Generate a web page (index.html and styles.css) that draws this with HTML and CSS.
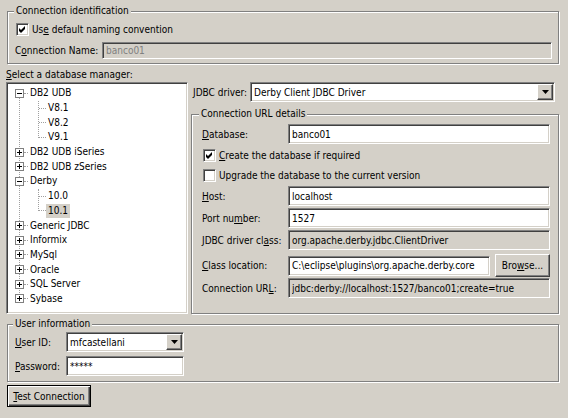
FILE: index.html
```html
<!DOCTYPE html>
<html>
<head>
    <meta charset="utf-8">
    <link rel="stylesheet" href="styles.css">
</head>
<body>
<div id="dialog">
    <fieldset class="group ident">
        <legend>Connection identification</legend>
        <div class="check-row">
            <span class="checkbox"><svg width="9" height="9" viewBox="0 0 9 9"><polygon points="1,3 3,5 7,1 7,4 3,8 1,6" fill="#000"/></svg></span>
            <span>Us<u>e</u> default naming convention</span>
        </div>
        <div class="field-row name-row">
            <span class="label">C<u>o</u>nnection Name:</span>
            <input class="field disabled" type="text" value="banco01" disabled>
        </div>
    </fieldset>

    <div class="caption"><u>S</u>elect a database manager:</div>

    <div class="main">
        <div class="tree">
            <ul class="roots">
                <li>
                    <div class="node"><span class="expander"></span><span class="hline"></span><span class="text">DB2 UDB</span></div>
                    <ul class="children">
                        <li><div class="node"><span class="hline"></span><span class="text">V8.1</span></div></li>
                        <li><div class="node"><span class="hline"></span><span class="text">V8.2</span></div></li>
                        <li><div class="node"><span class="hline"></span><span class="text">V9.1</span></div></li>
                    </ul>
                </li>
                <li><div class="node"><span class="expander closed"></span><span class="hline"></span><span class="text">DB2 UDB iSeries</span></div></li>
                <li><div class="node"><span class="expander closed"></span><span class="hline"></span><span class="text">DB2 UDB zSeries</span></div></li>
                <li>
                    <div class="node"><span class="expander"></span><span class="hline"></span><span class="text">Derby</span></div>
                    <ul class="children">
                        <li><div class="node"><span class="hline"></span><span class="text">10.0</span></div></li>
                        <li><div class="node selected"><span class="hline"></span><span class="text">10.1</span></div></li>
                    </ul>
                </li>
                <li><div class="node"><span class="expander closed"></span><span class="hline"></span><span class="text">Generic JDBC</span></div></li>
                <li><div class="node"><span class="expander closed"></span><span class="hline"></span><span class="text">Informix</span></div></li>
                <li><div class="node"><span class="expander closed"></span><span class="hline"></span><span class="text">MySql</span></div></li>
                <li><div class="node"><span class="expander closed"></span><span class="hline"></span><span class="text">Oracle</span></div></li>
                <li><div class="node"><span class="expander closed"></span><span class="hline"></span><span class="text">SQL Server</span></div></li>
                <li><div class="node"><span class="expander closed"></span><span class="hline"></span><span class="text">Sybase</span></div></li>
            </ul>
        </div>

        <div class="right">
            <div class="driver-row">
                <span class="label"><u>J</u>DBC driver:</span>
                <div class="combo driver-combo">
                    <span class="value">Derby Client JDBC Driver</span>
                    <span class="drop"><svg width="7" height="4" viewBox="0 0 7 4"><polygon points="0,0 7,0 3.5,4" fill="#000"/></svg></span>
                </div>
            </div>

            <fieldset class="group url">
                <legend>Connection URL details</legend>
                <div class="field-row first">
                    <span class="label"><u>D</u>atabase:</span>
                    <input class="field" type="text" value="banco01">
                </div>
                <div class="check-row">
                    <span class="checkbox"><svg width="9" height="9" viewBox="0 0 9 9"><polygon points="1,3 3,5 7,1 7,4 3,8 1,6" fill="#000"/></svg></span>
                    <span><u>C</u>reate the database if required</span>
                </div>
                <div class="check-row">
                    <span class="checkbox"></span>
                    <span>Up<u>g</u>rade the database to the current version</span>
                </div>
                <div class="field-row">
                    <span class="label"><u>H</u>ost:</span>
                    <input class="field" type="text" value="localhost">
                </div>
                <div class="field-row">
                    <span class="label">Port nu<u>m</u>ber:</span>
                    <input class="field" type="text" value="1527">
                </div>
                <div class="field-row">
                    <span class="label">JDBC driver cl<u>a</u>ss:</span>
                    <input class="field readonly" type="text" value="org.apache.derby.jdbc.ClientDriver" readonly>
                </div>
                <div class="field-row location-row">
                    <span class="label"><u>C</u>lass location:</span>
                    <input class="field" type="text" value="C:\eclipse\plugins\org.apache.derby.core_">
                    <button class="btn browse">Bro<u>w</u>se...</button>
                </div>
                <div class="field-row url-row">
                    <span class="label">Connection UR<u>L</u>:</span>
                    <input class="field readonly" type="text" value="jdbc:derby://localhost:1527/banco01;create=true" readonly>
                </div>
            </fieldset>
        </div>
    </div>

    <fieldset class="group user">
        <legend>User information</legend>
        <div class="field-row user-row">
            <span class="label"><u>U</u>ser ID:</span>
            <div class="combo user-combo">
                <span class="value">mfcastellani</span>
                <span class="drop"><svg width="7" height="4" viewBox="0 0 7 4"><polygon points="0,0 7,0 3.5,4" fill="#000"/></svg></span>
            </div>
        </div>
        <div class="field-row pass-row">
            <span class="label"><u>P</u>assword:</span>
            <input class="field pass" type="text" value="*****">
        </div>
    </fieldset>

    <button class="btn default"><u>T</u>est Connection</button>
</div>
</body>
</html>
```

FILE: styles.css
```css
* {
    box-sizing: border-box;
}

body {
    margin: 0;
    background: #d4d0c8;
    font-family: "DejaVu Sans Condensed", "Liberation Sans", sans-serif;
    font-size: 10px;
    color: #000;
}

#dialog {
    width: 568px;
    height: 418px;
    overflow: hidden;
}

u {
    text-underline-offset: 1px;
}

/* etched group boxes */
.group {
    margin: 0 9px 0 7px;
    padding: 0 6px;
    min-width: 0;
    border: 1px solid #808080;
    box-shadow: 1px 1px 0 #fff, inset 1px 1px 0 #fff;
}

.group legend {
    padding: 0 2px;
    line-height: 12px;
    background: #d4d0c8;
}

.ident {
    margin-top: 5px;
    padding-bottom: 4px;
}

.check-row {
    display: flex;
    align-items: center;
    height: 18px;
    margin-top: 2px;
}

.ident .check-row {
    height: 16px;
    margin-top: 4px;
}

.checkbox {
    flex: none;
    display: flex;
    align-items: center;
    justify-content: center;
    width: 13px;
    height: 13px;
    margin: 0 3px 0 2px;
    background: #fff;
    border: 1px solid;
    border-color: #808080 #fff #fff #808080;
    box-shadow: inset 1px 1px 0 #404040, inset -1px -1px 0 #d4d0c8;
}

.url .checkbox {
    margin-left: 4px;
}

.field-row {
    display: flex;
    align-items: center;
    height: 20px;
    margin-top: 2px;
}

.field-row .label {
    flex: none;
    width: 86px;
    margin-left: 3px;
    white-space: nowrap;
}

.field {
    flex: 1;
    min-width: 0;
    height: 20px;
    padding: 0 3px;
    font: inherit;
    color: #000;
    background: #fff;
    border: 1px solid;
    border-color: #808080 #fff #fff #808080;
    box-shadow: inset 1px 1px 0 #404040, inset -1px -1px 0 #d4d0c8;
    outline: none;
}

.field.readonly,
.field.disabled {
    background: #d4d0c8;
}

.field.disabled {
    color: #808080;
}

.name-row {
    height: 18px;
    margin-top: 4px;
}

.name-row .label {
    width: 87px;
    margin-left: 1px;
}

.name-row .field {
    height: 17px;
    margin-right: 0;
}

.caption {
    margin: 5px 0 0 6px;
    line-height: 12px;
}

.main {
    display: flex;
    gap: 3px;
    margin: 1px 9px 0 6px;
    height: 232px;
}

/* tree */
.tree {
    flex: none;
    width: 182px;
    height: 232px;
    padding-top: 3px;
    background: #fff;
    border: 1px solid;
    border-color: #808080 #fff #fff #808080;
    box-shadow: inset 1px 1px 0 #404040, inset -1px -1px 0 #d4d0c8;
    overflow: hidden;
}

.tree ul {
    list-style: none;
    margin: 0;
    padding: 0;
    position: relative;
}

.roots::before {
    content: '';
    position: absolute;
    left: 12px;
    top: 7px;
    bottom: 7px;
    border-left: 1px dotted #a0a0a0;
}

.children::before {
    content: '';
    position: absolute;
    left: 31px;
    top: 0;
    bottom: 7px;
    border-left: 1px dotted #a0a0a0;
}

.node {
    display: flex;
    align-items: center;
    height: 14.7px;
    padding-left: 8px;
    white-space: nowrap;
}

.children .node {
    padding-left: 31px;
}

.expander {
    position: relative;
    z-index: 1;
    flex: none;
    width: 9px;
    height: 9px;
    background: #fff;
    border: 1px solid #808080;
}

.expander::before {
    content: '';
    position: absolute;
    left: 1px;
    top: 3px;
    width: 5px;
    height: 1px;
    background: #000;
}

.expander.closed::after {
    content: '';
    position: absolute;
    left: 3px;
    top: 1px;
    width: 1px;
    height: 5px;
    background: #000;
}

.hline {
    flex: none;
    width: 4px;
    border-top: 1px dotted #a0a0a0;
}

.children .hline {
    width: 7px;
    margin-left: 1px;
}

.node .text {
    padding: 0 2px;
    line-height: 14px;
}

.node.selected .text {
    background: #d4d0c8;
}

/* right column */
.right {
    flex: 1;
    display: flex;
    flex-direction: column;
}

.driver-row {
    display: flex;
    align-items: center;
    height: 20px;
}

.driver-row .label {
    width: 59px;
    padding-left: 2px;
}

.combo {
    display: flex;
    align-items: center;
    height: 20px;
    padding: 1px 1px 1px 3px;
    background: #fff;
    border: 1px solid;
    border-color: #808080 #fff #fff #808080;
    box-shadow: inset 1px 1px 0 #404040, inset -1px -1px 0 #d4d0c8;
}

.combo .value {
    flex: 1;
    white-space: nowrap;
}

.driver-combo {
    width: 305px;
}

.user-combo {
    width: 118px;
}

.drop {
    flex: none;
    display: flex;
    align-items: center;
    justify-content: center;
    width: 16px;
    height: 16px;
    background: #d4d0c8;
    border: 1px solid;
    border-color: #fff #404040 #404040 #fff;
    box-shadow: inset -1px -1px 0 #808080, inset 1px 1px 0 #d4d0c8;
}

.url {
    flex: 1;
    margin: 6px 0 0 0;
    padding: 0 8px 0 7px;
}

.url .field-row.first {
    margin-top: 4px;
}

.location-row {
    height: 23px;
    margin-top: 4px;
}

.url-row {
    margin-top: 1px;
}

.btn {
    font: inherit;
    color: #000;
    background: #d4d0c8;
    padding: 0;
    border: 1px solid;
    border-color: #fff #404040 #404040 #fff;
    box-shadow: inset -1px -1px 0 #808080, inset 1px 1px 0 #d4d0c8;
}

.browse {
    flex: none;
    width: 55px;
    height: 23px;
    margin-left: 5px;
}

/* user information */
.user {
    margin-top: 4px;
    padding: 0 6px 5px 5px;
}

.user .field-row .label {
    width: 51px;
    margin-left: 2px;
}

.user-row {
    margin-top: 2px;
}

.pass-row {
    margin-top: 4px;
}

.pass-row .field {
    flex: none;
    width: 118px;
}

.default {
    display: block;
    width: 84px;
    height: 22px;
    margin: 3px 0 0 7px;
    border: 1px solid #000;
    box-shadow: inset 1px 1px 0 #fff, inset -1px -1px 0 #404040, inset -2px -2px 0 #808080;
}
```
